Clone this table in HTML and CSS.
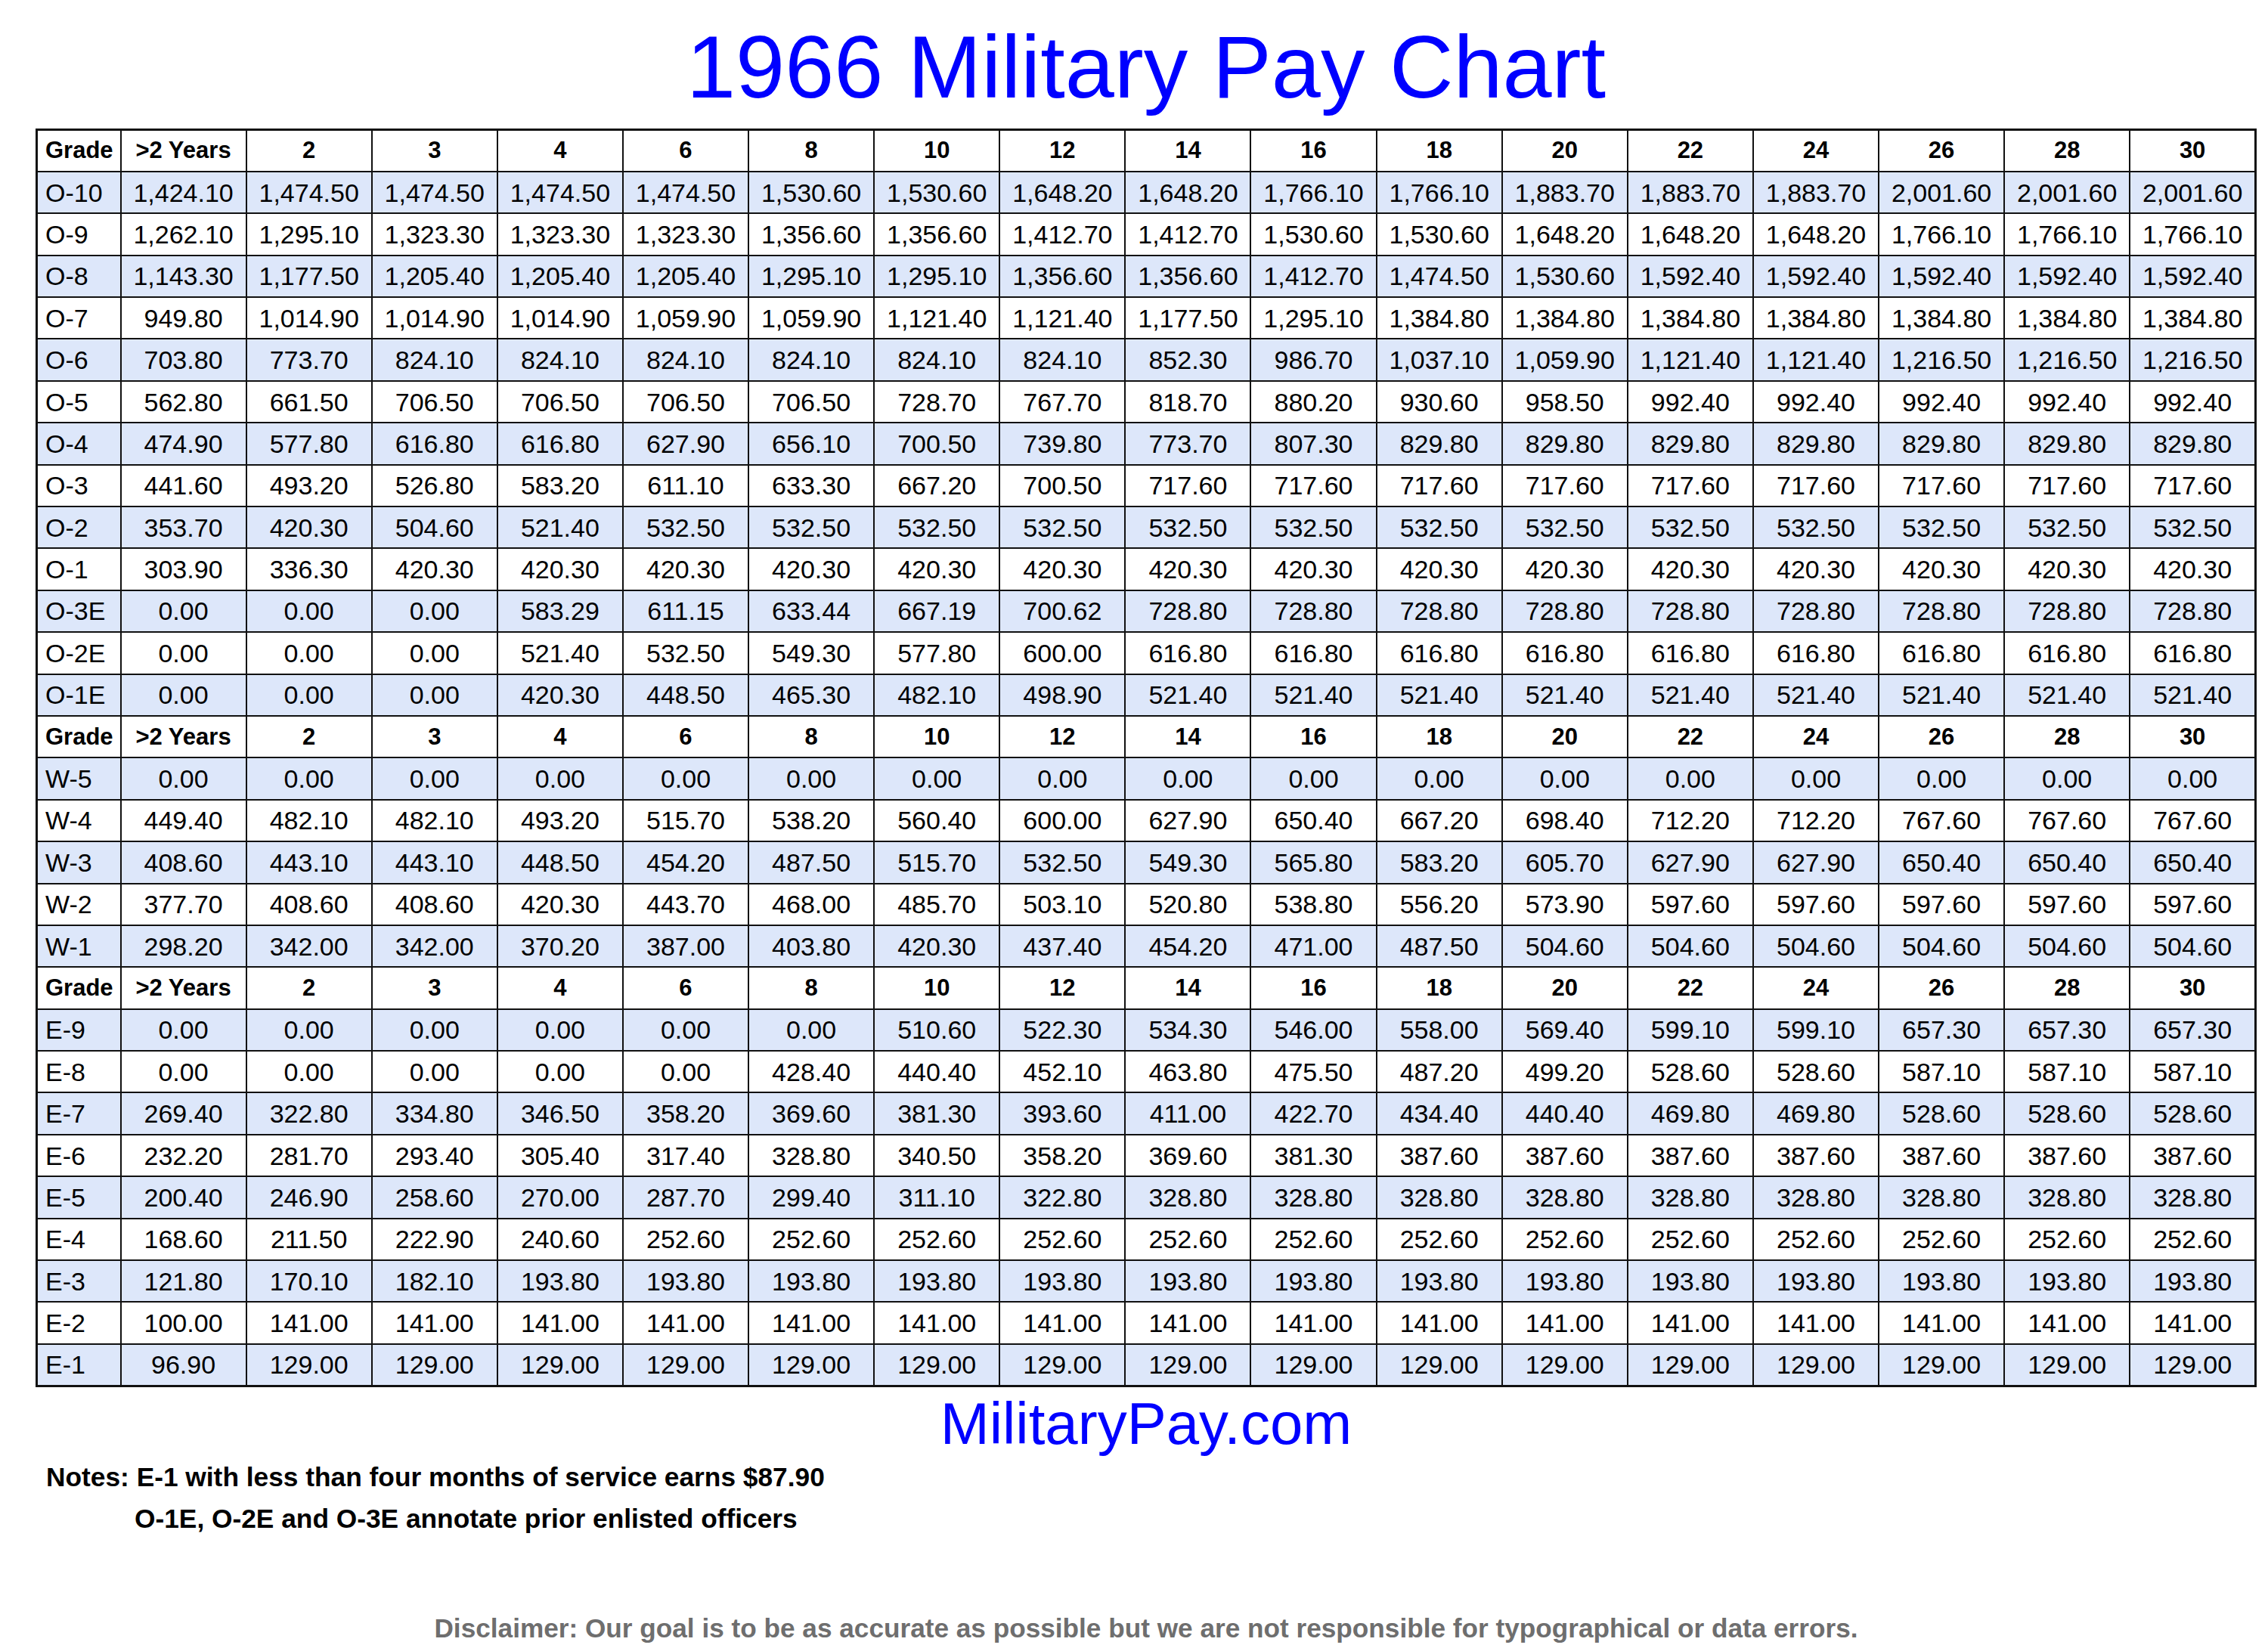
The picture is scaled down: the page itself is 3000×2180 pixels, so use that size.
FILE: index.html
```html
<!DOCTYPE html>
<html lang="en">
<head>
<meta charset="utf-8">
<title>1966 Military Pay Chart</title>
<link rel="stylesheet" href="styles.css">
</head>
<body>
<div class="page">
<h1 class="title">1966 Military Pay Chart</h1>
<table class="pay">
<colgroup><col class="cg"><col span="17"></colgroup>
<tbody>
<tr class="hdr"><td class="g">Grade</td><td>&gt;2 Years</td><td>2</td><td>3</td><td>4</td><td>6</td><td>8</td><td>10</td><td>12</td><td>14</td><td>16</td><td>18</td><td>20</td><td>22</td><td>24</td><td>26</td><td>28</td><td>30</td></tr>
<tr class="band"><td class="g">O-10</td><td>1,424.10</td><td>1,474.50</td><td>1,474.50</td><td>1,474.50</td><td>1,474.50</td><td>1,530.60</td><td>1,530.60</td><td>1,648.20</td><td>1,648.20</td><td>1,766.10</td><td>1,766.10</td><td>1,883.70</td><td>1,883.70</td><td>1,883.70</td><td>2,001.60</td><td>2,001.60</td><td>2,001.60</td></tr>
<tr><td class="g">O-9</td><td>1,262.10</td><td>1,295.10</td><td>1,323.30</td><td>1,323.30</td><td>1,323.30</td><td>1,356.60</td><td>1,356.60</td><td>1,412.70</td><td>1,412.70</td><td>1,530.60</td><td>1,530.60</td><td>1,648.20</td><td>1,648.20</td><td>1,648.20</td><td>1,766.10</td><td>1,766.10</td><td>1,766.10</td></tr>
<tr class="band"><td class="g">O-8</td><td>1,143.30</td><td>1,177.50</td><td>1,205.40</td><td>1,205.40</td><td>1,205.40</td><td>1,295.10</td><td>1,295.10</td><td>1,356.60</td><td>1,356.60</td><td>1,412.70</td><td>1,474.50</td><td>1,530.60</td><td>1,592.40</td><td>1,592.40</td><td>1,592.40</td><td>1,592.40</td><td>1,592.40</td></tr>
<tr><td class="g">O-7</td><td>949.80</td><td>1,014.90</td><td>1,014.90</td><td>1,014.90</td><td>1,059.90</td><td>1,059.90</td><td>1,121.40</td><td>1,121.40</td><td>1,177.50</td><td>1,295.10</td><td>1,384.80</td><td>1,384.80</td><td>1,384.80</td><td>1,384.80</td><td>1,384.80</td><td>1,384.80</td><td>1,384.80</td></tr>
<tr class="band"><td class="g">O-6</td><td>703.80</td><td>773.70</td><td>824.10</td><td>824.10</td><td>824.10</td><td>824.10</td><td>824.10</td><td>824.10</td><td>852.30</td><td>986.70</td><td>1,037.10</td><td>1,059.90</td><td>1,121.40</td><td>1,121.40</td><td>1,216.50</td><td>1,216.50</td><td>1,216.50</td></tr>
<tr><td class="g">O-5</td><td>562.80</td><td>661.50</td><td>706.50</td><td>706.50</td><td>706.50</td><td>706.50</td><td>728.70</td><td>767.70</td><td>818.70</td><td>880.20</td><td>930.60</td><td>958.50</td><td>992.40</td><td>992.40</td><td>992.40</td><td>992.40</td><td>992.40</td></tr>
<tr class="band"><td class="g">O-4</td><td>474.90</td><td>577.80</td><td>616.80</td><td>616.80</td><td>627.90</td><td>656.10</td><td>700.50</td><td>739.80</td><td>773.70</td><td>807.30</td><td>829.80</td><td>829.80</td><td>829.80</td><td>829.80</td><td>829.80</td><td>829.80</td><td>829.80</td></tr>
<tr><td class="g">O-3</td><td>441.60</td><td>493.20</td><td>526.80</td><td>583.20</td><td>611.10</td><td>633.30</td><td>667.20</td><td>700.50</td><td>717.60</td><td>717.60</td><td>717.60</td><td>717.60</td><td>717.60</td><td>717.60</td><td>717.60</td><td>717.60</td><td>717.60</td></tr>
<tr class="band"><td class="g">O-2</td><td>353.70</td><td>420.30</td><td>504.60</td><td>521.40</td><td>532.50</td><td>532.50</td><td>532.50</td><td>532.50</td><td>532.50</td><td>532.50</td><td>532.50</td><td>532.50</td><td>532.50</td><td>532.50</td><td>532.50</td><td>532.50</td><td>532.50</td></tr>
<tr><td class="g">O-1</td><td>303.90</td><td>336.30</td><td>420.30</td><td>420.30</td><td>420.30</td><td>420.30</td><td>420.30</td><td>420.30</td><td>420.30</td><td>420.30</td><td>420.30</td><td>420.30</td><td>420.30</td><td>420.30</td><td>420.30</td><td>420.30</td><td>420.30</td></tr>
<tr class="band"><td class="g">O-3E</td><td>0.00</td><td>0.00</td><td>0.00</td><td>583.29</td><td>611.15</td><td>633.44</td><td>667.19</td><td>700.62</td><td>728.80</td><td>728.80</td><td>728.80</td><td>728.80</td><td>728.80</td><td>728.80</td><td>728.80</td><td>728.80</td><td>728.80</td></tr>
<tr><td class="g">O-2E</td><td>0.00</td><td>0.00</td><td>0.00</td><td>521.40</td><td>532.50</td><td>549.30</td><td>577.80</td><td>600.00</td><td>616.80</td><td>616.80</td><td>616.80</td><td>616.80</td><td>616.80</td><td>616.80</td><td>616.80</td><td>616.80</td><td>616.80</td></tr>
<tr class="band"><td class="g">O-1E</td><td>0.00</td><td>0.00</td><td>0.00</td><td>420.30</td><td>448.50</td><td>465.30</td><td>482.10</td><td>498.90</td><td>521.40</td><td>521.40</td><td>521.40</td><td>521.40</td><td>521.40</td><td>521.40</td><td>521.40</td><td>521.40</td><td>521.40</td></tr>
<tr class="hdr"><td class="g">Grade</td><td>&gt;2 Years</td><td>2</td><td>3</td><td>4</td><td>6</td><td>8</td><td>10</td><td>12</td><td>14</td><td>16</td><td>18</td><td>20</td><td>22</td><td>24</td><td>26</td><td>28</td><td>30</td></tr>
<tr class="band"><td class="g">W-5</td><td>0.00</td><td>0.00</td><td>0.00</td><td>0.00</td><td>0.00</td><td>0.00</td><td>0.00</td><td>0.00</td><td>0.00</td><td>0.00</td><td>0.00</td><td>0.00</td><td>0.00</td><td>0.00</td><td>0.00</td><td>0.00</td><td>0.00</td></tr>
<tr><td class="g">W-4</td><td>449.40</td><td>482.10</td><td>482.10</td><td>493.20</td><td>515.70</td><td>538.20</td><td>560.40</td><td>600.00</td><td>627.90</td><td>650.40</td><td>667.20</td><td>698.40</td><td>712.20</td><td>712.20</td><td>767.60</td><td>767.60</td><td>767.60</td></tr>
<tr class="band"><td class="g">W-3</td><td>408.60</td><td>443.10</td><td>443.10</td><td>448.50</td><td>454.20</td><td>487.50</td><td>515.70</td><td>532.50</td><td>549.30</td><td>565.80</td><td>583.20</td><td>605.70</td><td>627.90</td><td>627.90</td><td>650.40</td><td>650.40</td><td>650.40</td></tr>
<tr><td class="g">W-2</td><td>377.70</td><td>408.60</td><td>408.60</td><td>420.30</td><td>443.70</td><td>468.00</td><td>485.70</td><td>503.10</td><td>520.80</td><td>538.80</td><td>556.20</td><td>573.90</td><td>597.60</td><td>597.60</td><td>597.60</td><td>597.60</td><td>597.60</td></tr>
<tr class="band"><td class="g">W-1</td><td>298.20</td><td>342.00</td><td>342.00</td><td>370.20</td><td>387.00</td><td>403.80</td><td>420.30</td><td>437.40</td><td>454.20</td><td>471.00</td><td>487.50</td><td>504.60</td><td>504.60</td><td>504.60</td><td>504.60</td><td>504.60</td><td>504.60</td></tr>
<tr class="hdr"><td class="g">Grade</td><td>&gt;2 Years</td><td>2</td><td>3</td><td>4</td><td>6</td><td>8</td><td>10</td><td>12</td><td>14</td><td>16</td><td>18</td><td>20</td><td>22</td><td>24</td><td>26</td><td>28</td><td>30</td></tr>
<tr class="band"><td class="g">E-9</td><td>0.00</td><td>0.00</td><td>0.00</td><td>0.00</td><td>0.00</td><td>0.00</td><td>510.60</td><td>522.30</td><td>534.30</td><td>546.00</td><td>558.00</td><td>569.40</td><td>599.10</td><td>599.10</td><td>657.30</td><td>657.30</td><td>657.30</td></tr>
<tr><td class="g">E-8</td><td>0.00</td><td>0.00</td><td>0.00</td><td>0.00</td><td>0.00</td><td>428.40</td><td>440.40</td><td>452.10</td><td>463.80</td><td>475.50</td><td>487.20</td><td>499.20</td><td>528.60</td><td>528.60</td><td>587.10</td><td>587.10</td><td>587.10</td></tr>
<tr class="band"><td class="g">E-7</td><td>269.40</td><td>322.80</td><td>334.80</td><td>346.50</td><td>358.20</td><td>369.60</td><td>381.30</td><td>393.60</td><td>411.00</td><td>422.70</td><td>434.40</td><td>440.40</td><td>469.80</td><td>469.80</td><td>528.60</td><td>528.60</td><td>528.60</td></tr>
<tr><td class="g">E-6</td><td>232.20</td><td>281.70</td><td>293.40</td><td>305.40</td><td>317.40</td><td>328.80</td><td>340.50</td><td>358.20</td><td>369.60</td><td>381.30</td><td>387.60</td><td>387.60</td><td>387.60</td><td>387.60</td><td>387.60</td><td>387.60</td><td>387.60</td></tr>
<tr class="band"><td class="g">E-5</td><td>200.40</td><td>246.90</td><td>258.60</td><td>270.00</td><td>287.70</td><td>299.40</td><td>311.10</td><td>322.80</td><td>328.80</td><td>328.80</td><td>328.80</td><td>328.80</td><td>328.80</td><td>328.80</td><td>328.80</td><td>328.80</td><td>328.80</td></tr>
<tr><td class="g">E-4</td><td>168.60</td><td>211.50</td><td>222.90</td><td>240.60</td><td>252.60</td><td>252.60</td><td>252.60</td><td>252.60</td><td>252.60</td><td>252.60</td><td>252.60</td><td>252.60</td><td>252.60</td><td>252.60</td><td>252.60</td><td>252.60</td><td>252.60</td></tr>
<tr class="band"><td class="g">E-3</td><td>121.80</td><td>170.10</td><td>182.10</td><td>193.80</td><td>193.80</td><td>193.80</td><td>193.80</td><td>193.80</td><td>193.80</td><td>193.80</td><td>193.80</td><td>193.80</td><td>193.80</td><td>193.80</td><td>193.80</td><td>193.80</td><td>193.80</td></tr>
<tr><td class="g">E-2</td><td>100.00</td><td>141.00</td><td>141.00</td><td>141.00</td><td>141.00</td><td>141.00</td><td>141.00</td><td>141.00</td><td>141.00</td><td>141.00</td><td>141.00</td><td>141.00</td><td>141.00</td><td>141.00</td><td>141.00</td><td>141.00</td><td>141.00</td></tr>
<tr class="band"><td class="g">E-1</td><td>96.90</td><td>129.00</td><td>129.00</td><td>129.00</td><td>129.00</td><td>129.00</td><td>129.00</td><td>129.00</td><td>129.00</td><td>129.00</td><td>129.00</td><td>129.00</td><td>129.00</td><td>129.00</td><td>129.00</td><td>129.00</td><td>129.00</td></tr>
</tbody>
</table>
<div class="brand">MilitaryPay.com</div>
<div class="notes">
<p class="note-first">Notes: E-1 with less than four months of service earns $87.90</p>
<p class="note-next">O-1E, O-2E and O-3E annotate prior enlisted officers</p>
</div>
<p class="disclaimer">Disclaimer: Our goal is to be as accurate as possible but we are not responsible for typographical or data errors.</p>
</div>
</body>
</html>
```

FILE: styles.css
```css
* { box-sizing: border-box; }
html, body { margin: 0; padding: 0; background: #ffffff; }
body {
  font-family: "Liberation Sans", Arial, Helvetica, sans-serif;
  color: #000000;
}
.page {
  width: 2938px;
  margin-left: 47px;
}
.title {
  margin: 30px 0 0 0;
  height: 117px;
  font-size: 117px;
  line-height: 117px;
  font-weight: normal;
  color: #0000ff;
  text-align: center;
}
.pay {
  margin-top: 23px;
  width: 2938px;
  border-collapse: collapse;
  table-layout: fixed;
  border: 3px solid #111111;
}
.pay col.cg { width: 111px; }
.pay tr { height: 55.4px; }
.pay td {
  border: 2px solid #111111;
  padding: 0;
  text-align: center;
  vertical-align: middle;
  font-size: 34px;
  line-height: 40px;
  white-space: nowrap;
  overflow: hidden;
}
.pay td.g {
  text-align: left;
  padding-left: 10px;
}
.pay tr.band td { background: #dde7fa; }
.pay tr.hdr td {
  font-weight: bold;
  font-size: 31px;
}
.brand {
  margin-top: 9px;
  height: 78px;
  font-size: 78px;
  line-height: 78px;
  color: #0000ff;
  text-align: center;
}
.notes {
  margin-top: 4px;
  font-weight: bold;
  font-size: 35.3px;
  line-height: 55px;
}
.notes p { margin: 0; }
.note-first { padding-left: 14px; }
.note-next { padding-left: 131px; }
.disclaimer {
  margin: 98px 0 0 0;
  font-weight: bold;
  font-size: 35.2px;
  line-height: 40px;
  color: #6e6e6e;
  text-align: center;
}
```
